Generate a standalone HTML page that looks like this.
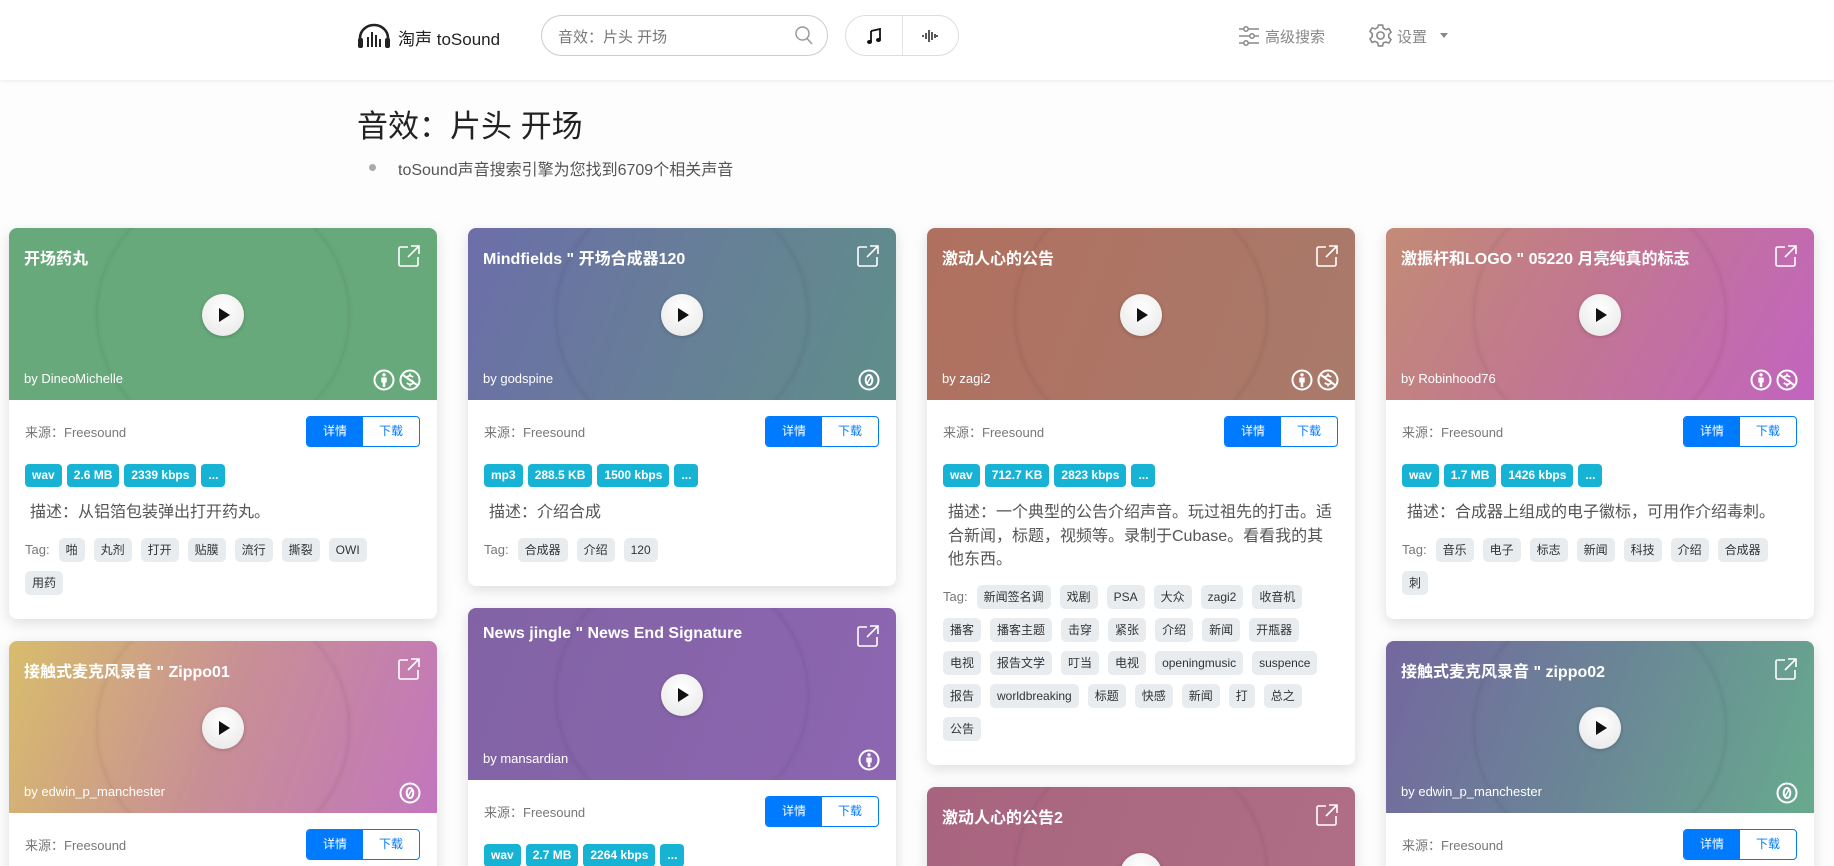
<!DOCTYPE html>
<html><head><meta charset="utf-8">
<style>
*{box-sizing:border-box;margin:0;padding:0}
html,body{width:1834px;height:866px;overflow:hidden}
body{background:#fdfdfd;font-family:"Liberation Sans","Noto Sans CJK SC",sans-serif;position:relative}
.hdr{position:absolute;left:0;top:0;width:1834px;height:80px;background:#fff;box-shadow:0 1px 4px rgba(0,0,0,.08)}
.abs{position:absolute}
.logo-t{left:398px;top:25px;font-size:17px;color:#222}
.search{left:541px;top:15px;width:287px;height:41px;border:1px solid #ccc;border-radius:21px}
.search span{position:absolute;left:16px;top:10px;font-size:15px;color:#777}
.bg2{left:845px;top:15px;width:114px;height:41px;border:1px solid #ddd;border-radius:21px}
.bg2 i{position:absolute;left:56px;top:0;width:1px;height:39px;background:#e4e4e4}
.nav{font-size:15px;color:#888;top:26px}
.title{left:357px;top:101px;font-size:31px;color:#222}
.sub{left:398px;top:156px;font-size:16px;color:#555}
.dot{left:369px;top:164px;width:7px;height:7px;border-radius:50%;background:#aaa}
.col{position:absolute;top:228px;width:428px;display:flex;flex-direction:column;gap:22px}
.card{background:#fff;border-radius:8px;box-shadow:0 4px 14px rgba(0,0,0,.13);overflow:hidden;flex-shrink:0}
.img{height:172px;position:relative;overflow:hidden}
.disc{position:absolute;left:87px;top:-40px;width:254px;height:254px;border-radius:50%;box-shadow:inset 0 0 6px rgba(0,0,0,.12),0 0 6px rgba(0,0,0,.06)}
.play{position:absolute;left:193px;top:66px;width:42px;height:42px;border-radius:50%;background:radial-gradient(circle at 50% 35%,#fff,#e6e6e6);box-shadow:0 1px 4px rgba(0,0,0,.2)}
.play:after{content:"";position:absolute;left:17px;top:14px;border-left:11px solid #111;border-top:7px solid transparent;border-bottom:7px solid transparent}
.ttl{position:absolute;left:15px;top:17px;font-size:16px;font-weight:bold;color:#fff}
.ext{position:absolute;right:16px;top:16px}
.by{position:absolute;left:15px;top:143px;font-size:13px;color:#fff}
.lic{position:absolute;right:16px;top:141px;display:flex;gap:4px}
.body{padding:16px 17px 15px 16px}
.r1{display:flex;justify-content:space-between;align-items:center;height:31px}
.src{font-size:13px;color:#777}
.btns{display:flex;height:31px;width:114px;border:1px solid #007bff;border-radius:4px;overflow:hidden}
.btns span{flex:1;text-align:center;line-height:29px;font-size:12px;color:#007bff}
.btns span:first-child{background:#007bff;color:#fff}
.badges{margin-top:17px;display:flex;gap:5px;height:23px}
.badges span{background:#17b3d4;color:#fff;font-weight:bold;font-size:12px;border-radius:4px;padding:0 7px;line-height:23px}
.desc{margin-top:14px;margin-left:5px;font-size:16px;line-height:23.5px;color:#555}
.tags{margin-top:13.5px;display:flex;flex-wrap:wrap;align-items:center}
.tags b{font-weight:normal;font-size:13px;color:#777;margin:0 9px 9px 0;line-height:24px}
.tags span{font-size:12px;color:#333;background:#e9ecef;border-radius:5px;padding:0 7px;line-height:24px;margin:0 9px 9px 0}
</style></head><body>
<div class="hdr"></div>
<svg class="abs" style="left:357px;top:23px" width="34" height="26" viewBox="0 0 34 26"><path d="M3 20 V15 A14 13 0 0 1 31 15 V20" fill="none" stroke="#222" stroke-width="2.6"/><rect x="1" y="15" width="5" height="10" rx="2" fill="#222"/><rect x="28" y="15" width="5" height="10" rx="2" fill="#222"/><rect x="10" y="14" width="2" height="10" fill="#222"/><rect x="14" y="9" width="2" height="15" fill="#222"/><rect x="18" y="12" width="2" height="12" fill="#222"/><rect x="22" y="16" width="2" height="8" fill="#222"/></svg>
<div class="abs logo-t">淘声 toSound</div>
<div class="abs search"><span>音效：片头 开场</span><svg style="position:absolute;right:14px;top:10px" width="18" height="19" viewBox="0 0 18 19"><circle cx="7.5" cy="7.5" r="6.5" fill="none" stroke="#999" stroke-width="1.5"/><path d="M12 12.5 L17 18" stroke="#999" stroke-width="1.5"/></svg></div>
<div class="abs bg2"><i></i>
<svg style="position:absolute;left:21px;top:12px" width="14" height="16" viewBox="0 0 14 16"><path d="M4 3 L13 1 V12" fill="none" stroke="#111" stroke-width="1.8"/><path d="M4 3 V14" stroke="#111" stroke-width="1.8"/><ellipse cx="2.5" cy="14" rx="2.5" ry="2" fill="#111"/><ellipse cx="11.5" cy="12" rx="2.5" ry="2" fill="#111"/></svg>
<svg style="position:absolute;left:76px;top:12px" width="16" height="16" viewBox="0 0 16 16" stroke="#111" stroke-width="1.4"><path d="M1 7v2M4 5v6M7 2v12M10 4v8M13 6v4M15 7v2"/></svg></div>
<svg class="abs" style="left:1238px;top:25px" width="22" height="22" viewBox="0 0 22 22" fill="none" stroke="#888" stroke-width="1.5"><path d="M1 4h5M10 4h11M1 11h11M16 11h5M1 18h5M10 18h11"/><circle cx="8" cy="4" r="2.2"/><circle cx="14" cy="11" r="2.2"/><circle cx="8" cy="18" r="2.2"/></svg>
<div class="abs nav" style="left:1265px">高级搜索</div>
<svg class="abs" style="left:1368px;top:23px" width="25" height="25" viewBox="0 0 24 24" fill="none" stroke="#888" stroke-width="1.5"><path d="M10 2h4l.7 3 2.5 1.4 2.9-1 2 3.4-2.2 2.1v2.9l2.2 2.1-2 3.4-2.9-1L14.7 19 14 22h-4l-.7-3-2.5-1.4-2.9 1-2-3.4L4.1 13.1v-2.9L1.9 8.1l2-3.4 2.9 1L9.3 4.3z"/><circle cx="12" cy="12" r="3.5"/></svg>
<div class="abs nav" style="left:1397px">设置</div>
<div class="abs" style="left:1440px;top:33px;border-top:5px solid #888;border-left:4px solid transparent;border-right:4px solid transparent"></div>
<div class="abs title">音效：片头 开场</div>
<div class="abs dot"></div>
<div class="abs sub">toSound声音搜索引擎为您找到6709个相关声音</div>

<svg width="0" height="0" style="position:absolute"><defs>
<g id="ext"><path d="M11 3H3.5A1.5 1.5 0 0 0 2 4.5v16A1.5 1.5 0 0 0 3.5 22h16a1.5 1.5 0 0 0 1.5-1.5V13" fill="none" stroke="#fff" stroke-width="1.6"/><path d="M14 2h8v8M22 2 11 13" fill="none" stroke="#fff" stroke-width="1.6"/></g>
<g id="by"><circle cx="11" cy="11" r="9.5" fill="none" stroke="#fff" stroke-width="2"/><circle cx="11" cy="5.8" r="1.7" fill="#fff"/><path d="M8.3 8.5h5.4v5h-1.4v4.5h-2.6v-4.5H8.3z" fill="#fff"/></g>
<g id="nc"><circle cx="11" cy="11" r="9.5" fill="none" stroke="#fff" stroke-width="2"/><path d="M4 6 L18 16" stroke="#fff" stroke-width="2"/><path d="M14 8.2c-.7-1-1.8-1.4-3-1.4-1.6 0-2.8.8-2.8 2 0 2.8 6 1.6 6 4.4 0 1.3-1.3 2.1-3 2.1-1.3 0-2.6-.5-3.3-1.6M11 4.5v2.3M11 15.3v2.2" fill="none" stroke="#fff" stroke-width="1.7"/></g>
<g id="cc0"><circle cx="11" cy="11" r="9.5" fill="none" stroke="#fff" stroke-width="2"/><ellipse cx="11" cy="11" rx="3.3" ry="5" fill="none" stroke="#fff" stroke-width="2"/><path d="M9 14.5 L13 7.5" stroke="#fff" stroke-width="1.4"/></g>
</defs></svg>

<div class="col" style="left:9px">
 <div class="card"><div class="img" style="background:#68a97b"><div class="disc"></div><div class="play"></div><div class="ttl">开场药丸</div><svg class="ext" width="24" height="24"><use href="#ext"/></svg><div class="by">by DineoMichelle</div><div class="lic"><svg width="22" height="22"><use href="#by"/></svg><svg width="22" height="22"><use href="#nc"/></svg></div></div>
 <div class="body"><div class="r1"><span class="src">来源：Freesound</span><div class="btns"><span>详情</span><span>下载</span></div></div>
 <div class="badges"><span>wav</span><span>2.6 MB</span><span>2339 kbps</span><span>...</span></div>
 <div class="desc">描述：从铝箔包装弹出打开药丸。</div>
 <div class="tags"><b>Tag:</b><span>啪</span><span>丸剂</span><span>打开</span><span>贴膜</span><span>流行</span><span>撕裂</span><span>OWI</span><span>用药</span></div></div></div>
 <div class="card"><div class="img" style="background:linear-gradient(110deg,#d8bd6c 0%,#c88f95 50%,#c276bd 100%)"><div class="disc"></div><div class="play"></div><div class="ttl">接触式麦克风录音 " Zippo01</div><svg class="ext" width="24" height="24"><use href="#ext"/></svg><div class="by">by edwin_p_manchester</div><div class="lic"><svg width="22" height="22"><use href="#cc0"/></svg></div></div>
 <div class="body"><div class="r1"><span class="src">来源：Freesound</span><div class="btns"><span>详情</span><span>下载</span></div></div>
 <div class="badges"><span>wav</span><span>2.0 MB</span><span>2100 kbps</span><span>...</span></div></div></div>
</div>

<div class="col" style="left:468px">
 <div class="card"><div class="img" style="background:linear-gradient(110deg,#6c6ea9 0%,#668096 55%,#5f8e8a 100%)"><div class="disc"></div><div class="play"></div><div class="ttl">Mindfields " 开场合成器120</div><svg class="ext" width="24" height="24"><use href="#ext"/></svg><div class="by">by godspine</div><div class="lic"><svg width="22" height="22"><use href="#cc0"/></svg></div></div>
 <div class="body"><div class="r1"><span class="src">来源：Freesound</span><div class="btns"><span>详情</span><span>下载</span></div></div>
 <div class="badges"><span>mp3</span><span>288.5 KB</span><span>1500 kbps</span><span>...</span></div>
 <div class="desc">描述：介绍合成</div>
 <div class="tags"><b>Tag:</b><span>合成器</span><span>介绍</span><span>120</span></div></div></div>
 <div class="card"><div class="img" style="background:linear-gradient(110deg,#8163a4,#8d66b1)"><div class="disc"></div><div class="play"></div><div class="ttl">News jingle " News End Signature</div><svg class="ext" width="24" height="24"><use href="#ext"/></svg><div class="by">by mansardian</div><div class="lic"><svg width="22" height="22"><use href="#by"/></svg></div></div>
 <div class="body"><div class="r1"><span class="src">来源：Freesound</span><div class="btns"><span>详情</span><span>下载</span></div></div>
 <div class="badges"><span>wav</span><span>2.7 MB</span><span>2264 kbps</span><span>...</span></div></div></div>
</div>

<div class="col" style="left:927px">
 <div class="card"><div class="img" style="background:linear-gradient(110deg,#b0705f,#a97a6b)"><div class="disc"></div><div class="play"></div><div class="ttl">激动人心的公告</div><svg class="ext" width="24" height="24"><use href="#ext"/></svg><div class="by">by zagi2</div><div class="lic"><svg width="22" height="22"><use href="#by"/></svg><svg width="22" height="22"><use href="#nc"/></svg></div></div>
 <div class="body"><div class="r1"><span class="src">来源：Freesound</span><div class="btns"><span>详情</span><span>下载</span></div></div>
 <div class="badges"><span>wav</span><span>712.7 KB</span><span>2823 kbps</span><span>...</span></div>
 <div class="desc">描述：一个典型的公告介绍声音。玩过祖先的打击。适合新闻，标题，视频等。录制于Cubase。看看我的其他东西。</div>
 <div class="tags"><b>Tag:</b><span>新闻签名调</span><span>戏剧</span><span>PSA</span><span>大众</span><span>zagi2</span><span>收音机</span><span>播客</span><span>播客主题</span><span>击穿</span><span>紧张</span><span>介绍</span><span>新闻</span><span>开瓶器</span><span>电视</span><span>报告文学</span><span>叮当</span><span>电视</span><span>openingmusic</span><span>suspence</span><span>报告</span><span>worldbreaking</span><span>标题</span><span>快感</span><span>新闻</span><span>打</span><span>总之</span><span>公告</span></div></div></div>
 <div class="card"><div class="img" style="background:linear-gradient(110deg,#a8647e,#b06f86)"><div class="disc"></div><div class="play"></div><div class="ttl">激动人心的公告2</div><svg class="ext" width="24" height="24"><use href="#ext"/></svg><div class="by">by zagi2</div></div>
 <div class="body"></div></div>
</div>

<div class="col" style="left:1386px">
 <div class="card"><div class="img" style="background:linear-gradient(120deg,#c28b76 0%,#c27790 45%,#c264c0 100%)"><div class="disc"></div><div class="play"></div><div class="ttl">激振杆和LOGO " 05220 月亮纯真的标志</div><svg class="ext" width="24" height="24"><use href="#ext"/></svg><div class="by">by Robinhood76</div><div class="lic"><svg width="22" height="22"><use href="#by"/></svg><svg width="22" height="22"><use href="#nc"/></svg></div></div>
 <div class="body"><div class="r1"><span class="src">来源：Freesound</span><div class="btns"><span>详情</span><span>下载</span></div></div>
 <div class="badges"><span>wav</span><span>1.7 MB</span><span>1426 kbps</span><span>...</span></div>
 <div class="desc">描述：合成器上组成的电子徽标，可用作介绍毒刺。</div>
 <div class="tags"><b>Tag:</b><span>音乐</span><span>电子</span><span>标志</span><span>新闻</span><span>科技</span><span>介绍</span><span>合成器</span><span>刺</span></div></div></div>
 <div class="card"><div class="img" style="background:linear-gradient(110deg,#74679f 0%,#6a8696 50%,#68aa8e 100%)"><div class="disc"></div><div class="play"></div><div class="ttl">接触式麦克风录音 " zippo02</div><svg class="ext" width="24" height="24"><use href="#ext"/></svg><div class="by">by edwin_p_manchester</div><div class="lic"><svg width="22" height="22"><use href="#cc0"/></svg></div></div>
 <div class="body"><div class="r1"><span class="src">来源：Freesound</span><div class="btns"><span>详情</span><span>下载</span></div></div>
 <div class="badges"><span>wav</span><span>1.9 MB</span><span>2100 kbps</span><span>...</span></div></div></div>
</div>
</body></html>
